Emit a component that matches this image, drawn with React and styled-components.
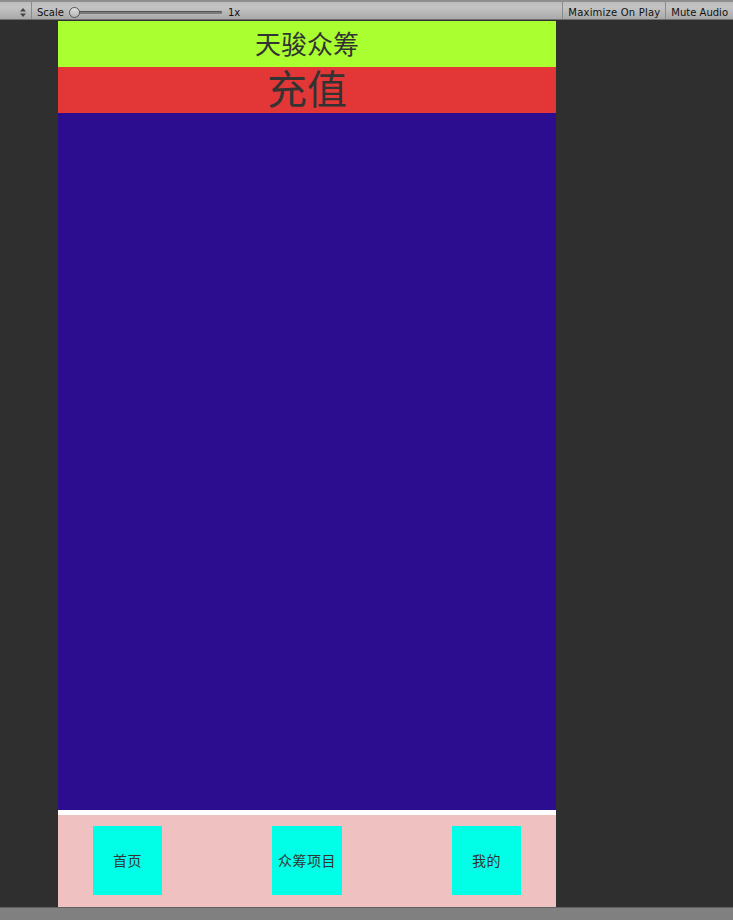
import React from "react";
import styled, { createGlobalStyle } from "styled-components";

const GlobalStyle = createGlobalStyle`
  html, body {
    margin: 0;
    padding: 0;
    background: #2f2f2f;
  }
  body {
    width: 733px;
    height: 920px;
    overflow: hidden;
    font-family: "Noto Sans CJK SC", "Noto Sans", sans-serif;
  }
`;

const Editor = styled.div`
  width: 733px;
  height: 920px;
  display: flex;
  flex-direction: column;
  background: #2f2f2f;
`;

const Toolbar = styled.div`
  height: 20px;
  flex: 0 0 20px;
  box-sizing: border-box;
  display: flex;
  align-items: stretch;
  background: linear-gradient(#bdbdbd, #c4c4c4 30%, #a9a9a9);
  border-top: 2px solid #8f8f8f;
  border-bottom: 1px solid #6f6f6f;
  font-family: "DejaVu Sans", sans-serif;
  font-size: 10px;
  color: #111;
`;

const ToolSection = styled.div`
  display: flex;
  align-items: center;
  padding: 3px ${(p) => p.$pad ?? 5}px 0;
  border-right: ${(p) => (p.$sepRight ? "1px solid #8a8a8a" : "none")};
  border-left: ${(p) => (p.$sepLeft ? "1px solid #8a8a8a" : "none")};
  gap: 5px;
  width: ${(p) => (p.$w ? `${p.$w}px` : "auto")};
  justify-content: ${(p) => p.$justify || "flex-start"};
  box-sizing: border-box;
  flex: ${(p) => (p.$grow ? 1 : "none")};
  letter-spacing: ${(p) => p.$spacing || 0}px;
`;

const Slider = styled.div`
  position: relative;
  width: 152px;
  height: 3px;
  border-radius: 2px;
  background: #7b7b7b;
  box-shadow: inset 0 1px 0 #555;
  margin: 0 1px;
`;

const Knob = styled.div`
  position: absolute;
  left: -1px;
  top: -4px;
  width: 9px;
  height: 9px;
  border-radius: 50%;
  background: linear-gradient(#e0e0e0, #b5b5b5);
  border: 1px solid #555;
`;

const Viewport = styled.div`
  flex: 1;
  display: flex;
  justify-content: flex-start;
  padding: 1px 0 0 58px;
`;

const Phone = styled.div`
  width: 498px;
  display: flex;
  flex-direction: column;
`;

const Band = styled.div`
  height: 46px;
  flex: 0 0 46px;
  box-sizing: border-box;
  background: ${(p) => p.$bg};
  display: flex;
  align-items: center;
  justify-content: center;
  color: #333333;
  font-size: ${(p) => p.$size}px;
  line-height: 1;
  padding-bottom: ${(p) => p.$lift || 0}px;
`;

const Content = styled.div`
  flex: 1;
  background: #2c0c8f;
`;

const Footer = styled.div`
  flex: 0 0 97px;
  box-sizing: border-box;
  border-top: 5px solid #ffffff;
  background: #f0c1c1;
  display: flex;
  align-items: flex-start;
  justify-content: space-between;
  padding: 11px 35px 0 35px;
`;

const NavButton = styled.div`
  width: ${(p) => p.$w || 69}px;
  height: 69px;
  background: #00ffe6;
  color: #333333;
  font-size: 14px;
  display: flex;
  align-items: center;
  justify-content: center;
  white-space: nowrap;
  letter-spacing: 0.5px;
  padding-bottom: 1px;
  box-sizing: border-box;
`;

const StatusBar = styled.div`
  flex: 0 0 13px;
  box-sizing: border-box;
  background: #808080;
  border-top: 1px solid #606060;
`;

function UpDown() {
  return (
    <svg width="6" height="9" viewBox="0 0 6 9">
      <path d="M3 0 L6 3.5 H0 Z" fill="#444" />
      <path d="M3 9 L6 5.5 H0 Z" fill="#444" />
    </svg>
  );
}

export default function App() {
  return (
    <>
      <GlobalStyle />
      <Editor>
        <Toolbar>
          <ToolSection $w={32} $justify="flex-end" $sepRight>
            <UpDown />
          </ToolSection>
          <ToolSection $grow>
            <span>Scale</span>
            <Slider>
              <Knob />
            </Slider>
            <span>1x</span>
          </ToolSection>
          <ToolSection $sepLeft $spacing={0.2}>Maximize On Play</ToolSection>
          <ToolSection $sepLeft>Mute Audio</ToolSection>
        </Toolbar>
        <Viewport>
          <Phone>
            <Band $bg="#a9ff2f" $size={26} $lift={3}>天骏众筹</Band>
            <Band $bg="#e33737" $size={40} $lift={6}>充值</Band>
            <Content />
            <Footer>
              <NavButton>首页</NavButton>
              <NavButton $w={70}>众筹项目</NavButton>
              <NavButton>我的</NavButton>
            </Footer>
          </Phone>
        </Viewport>
        <StatusBar />
      </Editor>
    </>
  );
}
